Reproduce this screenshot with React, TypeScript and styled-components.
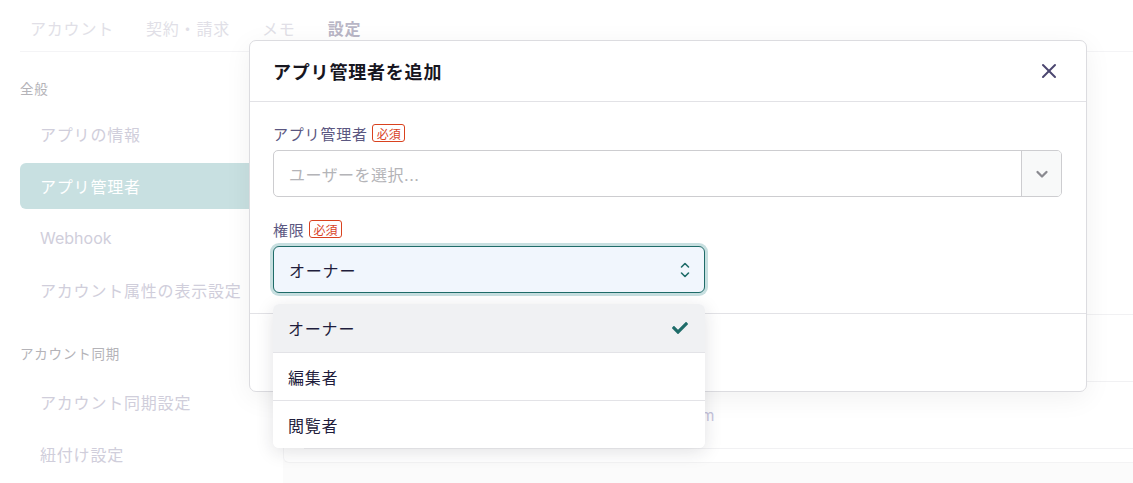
import React from "react";
import styled, { createGlobalStyle } from "styled-components";
import { X } from "lucide-react";
import { FaCheck } from "react-icons/fa";

const GlobalStyle = createGlobalStyle`
  body {
    margin: 0;
    font-family: Inter, "Noto Sans CJK JP", sans-serif;
    letter-spacing: 0.05em;
    background: #ffffff;
  }
`;

const Page = styled.div`
  position: relative;
  width: 1133px;
  height: 483px;
  overflow: hidden;
  background: #ffffff;
`;

const TabBar = styled.div`
  display: flex;
  align-items: center;
  gap: 12px;
  height: 52px;
  margin-left: 20px;
  padding-top: 4px;
  box-sizing: border-box;
  border-bottom: 1px solid #f4f4f6;
`;

const Tab = styled.div<{ $active?: boolean }>`
  padding: 0 10px;
  font-size: 16px;
  font-weight: ${(p) => (p.$active ? 700 : 400)};
  color: ${(p) => (p.$active ? "#b9b6c6" : "#e1dfe7")};
`;

const Body = styled.div`
  display: flex;
  height: 431px;
`;

const Sidebar = styled.nav`
  width: 263px;
  padding-left: 20px;
  box-sizing: border-box;
  flex-shrink: 0;
`;

const SectionHeading = styled.div<{ $top: number; $bottom: number }>`
  margin: ${(p) => p.$top}px 0 ${(p) => p.$bottom}px;
  font-size: 13.5px;
  line-height: 20px;
  color: #b4b3b8;
`;

const NavList = styled.div`
  display: flex;
  flex-direction: column;
  gap: 6px;
`;

const NavItem = styled.div<{ $active?: boolean; $latin?: boolean }>`
  height: 46px;
  display: flex;
  align-items: center;
  padding-left: 20px;
  border-radius: 6px;
  font-size: 16px;
  letter-spacing: ${(p) => (p.$latin ? "0" : "0.05em")};
  color: ${(p) => (p.$active ? "#ffffff" : "#d0cedb")};
  background: ${(p) => (p.$active ? "#c8e0e1" : "transparent")};
`;

const Content = styled.div`
  flex: 1;
  margin-left: 20px;
  background: #fbfbfb;
`;

const Card = styled.div`
  height: 410px;
  background: #ffffff;
  border-bottom-left-radius: 6px;
  border-left: 1px solid #f5f5f6;
  border-bottom: 1px solid #f3f3f4;
  display: flex;
  flex-direction: column;
  justify-content: flex-end;
`;

const Row = styled.div<{ $height: number }>`
  height: ${(p) => p.$height}px;
  box-sizing: border-box;
  margin-left: 20px;
  border-top: 1px solid #f1f1f3;
  display: flex;
  align-items: center;
  padding-left: 258px;
  font-size: 15px;
  letter-spacing: 0;
  color: #c6c4dc;
`;

const Modal = styled.div`
  position: absolute;
  left: 249px;
  top: 40px;
  width: 838px;
  height: 352px;
  box-sizing: border-box;
  background: #ffffff;
  border: 1px solid #dcdce0;
  border-radius: 7px;
  box-shadow: 0 6px 28px rgba(0, 0, 0, 0.06);
  display: flex;
  flex-direction: column;
`;

const ModalHeader = styled.div`
  height: 60px;
  flex-shrink: 0;
  display: flex;
  align-items: center;
  justify-content: space-between;
  padding: 0 25px 0 23px;
  border-bottom: 1px solid #e2e2e6;
`;

const Title = styled.h2`
  margin: 0;
  font-size: 18px;
  font-weight: 700;
  color: #17161f;
`;

const CloseButton = styled.button`
  border: none;
  background: none;
  padding: 0;
  display: flex;
  color: #4b4670;
`;

const ModalBody = styled.div`
  padding: 21px 24px 20px 23px;
  border-bottom: 1px solid #e2e2e6;
`;

const Field = styled.div<{ $gap?: number }>`
  margin-top: ${(p) => p.$gap ?? 0}px;
`;

const LabelRow = styled.div`
  display: flex;
  align-items: center;
  gap: 4px;
  height: 20px;
  margin-bottom: 7px;
  font-size: 15px;
  color: #5b5781;
`;

const Required = styled.span`
  display: inline-flex;
  align-items: center;
  height: 18px;
  box-sizing: border-box;
  padding: 0 3px 0 4px;
  border: 1px solid #d9421f;
  border-radius: 3px;
  font-size: 12px;
  letter-spacing: 0;
  color: #d9421f;
`;

const SelectBox = styled.div`
  display: flex;
  height: 47px;
  box-sizing: border-box;
  border: 1px solid #cdcdd0;
  border-radius: 5px;
  overflow: hidden;
`;

const Placeholder = styled.div`
  flex: 1;
  display: flex;
  align-items: center;
  padding-left: 15px;
  font-size: 16px;
  letter-spacing: 0.03em;
  color: #b4b4b8;
`;

const Toggle = styled.div`
  width: 39px;
  display: flex;
  align-items: center;
  justify-content: center;
  border-left: 1px solid #cdcdd0;
  background: #f8f9f9;
  color: #8a8a90;
`;

const SelectWrap = styled.div`
  position: relative;
  width: 432px;
`;

const FocusSelect = styled.div`
  height: 47px;
  box-sizing: border-box;
  display: flex;
  align-items: center;
  justify-content: space-between;
  padding: 0 14px 0 15px;
  border: 1.5px solid #1f6c69;
  border-radius: 6px;
  background: #f1f6fd;
  box-shadow: 0 0 0 3px #c7dfe0;
  font-size: 16px;
  color: #1f1d3c;
`;

const Menu = styled.div`
  position: absolute;
  left: 0;
  right: 0;
  top: 58px;
  background: #ffffff;
  border-radius: 6px;
  box-shadow: 0 4px 18px rgba(30, 30, 50, 0.13);
  overflow: hidden;
`;

const Option = styled.div<{ $selected?: boolean }>`
  height: 48px;
  box-sizing: border-box;
  display: flex;
  align-items: center;
  justify-content: space-between;
  padding: 0 17px 0 15px;
  font-size: 16px;
  color: #1f1d3c;
  background: ${(p) => (p.$selected ? "#f0f1f3" : "#ffffff")};
  & + & {
    border-top: 1px solid #e3e3e7;
  }
`;

const ModalFooter = styled.div`
  flex: 1;
`;

const ChevronDown = () => (
  <svg width="14" height="14" viewBox="0 0 14 14" fill="none">
    <path d="M2.5 5l4.5 4.5L11.5 5" stroke="currentColor" strokeWidth="2.3" strokeLinecap="round" strokeLinejoin="round" />
  </svg>
);

const UpDown = () => (
  <svg width="10" height="18" viewBox="0 0 10 18" fill="none">
    <path d="M1.5 6L5 2.5 8.5 6" stroke="#1f6c69" strokeWidth="1.6" strokeLinecap="round" strokeLinejoin="round" />
    <path d="M1.5 12L5 15.5 8.5 12" stroke="#1f6c69" strokeWidth="1.6" strokeLinecap="round" strokeLinejoin="round" />
  </svg>
);

const tabs = ["アカウント", "契約・請求", "メモ", "設定"];
const roles = ["オーナー", "編集者", "閲覧者"];

const App = () => {
  return (
    <Page>
      <GlobalStyle />
      <TabBar>
        {tabs.map((t) => (
          <Tab key={t} $active={t === "設定"}>
            {t}
          </Tab>
        ))}
      </TabBar>
      <Body>
        <Sidebar>
          <SectionHeading $top={27} $bottom={12}>全般</SectionHeading>
          <NavList>
            <NavItem>アプリの情報</NavItem>
            <NavItem $active>アプリ管理者</NavItem>
            <NavItem $latin>Webhook</NavItem>
            <NavItem>アカウント属性の表示設定</NavItem>
          </NavList>
          <SectionHeading $top={31} $bottom={15}>アカウント同期</SectionHeading>
          <NavList>
            <NavItem>アカウント同期設定</NavItem>
            <NavItem>紐付け設定</NavItem>
          </NavList>
        </Sidebar>
        <Content>
          <Card>
            <Row $height={67} />
            <Row $height={67}>admin@example.com</Row>
            <Row $height={14} />
          </Card>
        </Content>
      </Body>

      <Modal>
        <ModalHeader>
          <Title>アプリ管理者を追加</Title>
          <CloseButton>
            <X size={24} strokeWidth={2} />
          </CloseButton>
        </ModalHeader>
        <ModalBody>
          <Field>
            <LabelRow>
              アプリ管理者<Required>必須</Required>
            </LabelRow>
            <SelectBox>
              <Placeholder>ユーザーを選択...</Placeholder>
              <Toggle>
                <ChevronDown />
              </Toggle>
            </SelectBox>
          </Field>
          <Field $gap={22}>
            <LabelRow>
              権限<Required>必須</Required>
            </LabelRow>
            <SelectWrap>
              <FocusSelect>
                オーナー
                <UpDown />
              </FocusSelect>
              <Menu>
                {roles.map((r, i) => (
                  <Option key={r} $selected={i === 0}>
                    {r}
                    {i === 0 && <FaCheck size={16} color="#1f6c69" />}
                  </Option>
                ))}
              </Menu>
            </SelectWrap>
          </Field>
        </ModalBody>
        <ModalFooter />
      </Modal>
    </Page>
  );
};

export default App;
